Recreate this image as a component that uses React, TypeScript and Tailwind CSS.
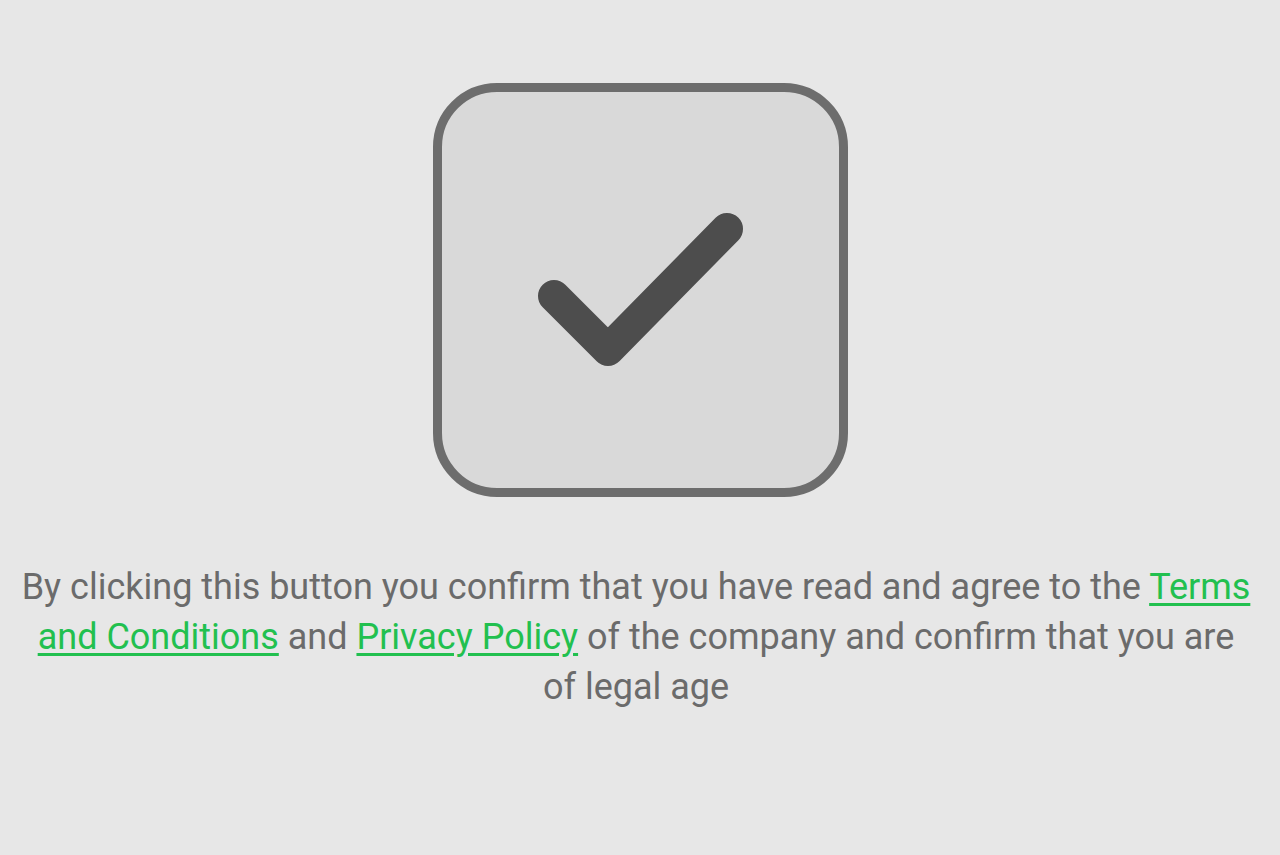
import React from "react";

export default function App() {
  return (
    <div className="min-h-[855px] w-full bg-[#e7e7e7] flex flex-col items-center pt-[83px]" style={{ fontFamily: "Roboto, 'Liberation Sans', sans-serif" }}>
      <button className="w-[415px] h-[414px] rounded-[64px] border-[9px] border-[#6d6d6d] bg-[#d9d9d9] flex items-center justify-center">
        <svg width="415" height="414" viewBox="0 0 415 414" className="shrink-0">
          <path d="M121 213 L175 267 L294 146" fill="none" stroke="#4d4d4d" strokeWidth="32" strokeLinecap="round" strokeLinejoin="round" />
        </svg>
      </button>
      <div className="w-full flex justify-start pl-[19px]">
        <p className="mt-[65px] w-[1234px] text-center text-[36px] leading-[50px] text-[#6b6b6b]">
          By clicking this button you confirm that you have read and agree to the{" "}
          <a className="text-[#22c04f] underline underline-offset-[4px]" href="#">Terms and Conditions</a> and{" "}
          <a className="text-[#22c04f] underline underline-offset-[4px]" href="#">Privacy Policy</a> of the company and confirm that you are of legal age
        </p>
      </div>
    </div>
  );
}
